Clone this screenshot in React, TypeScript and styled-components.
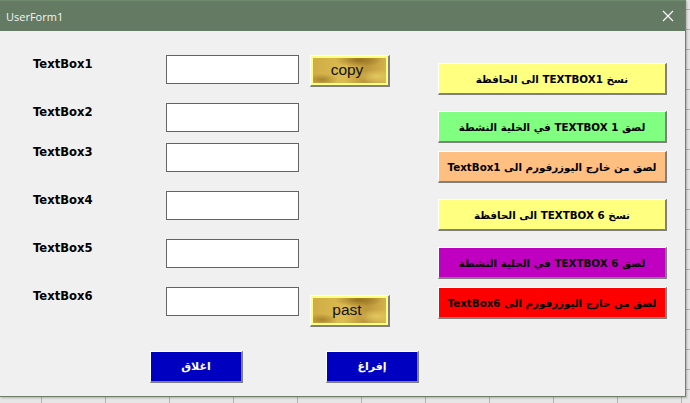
import * as React from 'react'
import styled, { createGlobalStyle } from 'styled-components'

const rows = [
  { label: 'TextBox1', top: 0, action: 'copy' },
  { label: 'TextBox2', top: 19 },
  { label: 'TextBox3', top: 11 },
  { label: 'TextBox4', top: 19 },
  { label: 'TextBox5', top: 19 },
  { label: 'TextBox6', top: 19, action: 'past' },
]

const sideButtons = [
  { text: 'نسخ TEXTBOX1 الى الحافظة', bg: '#ffff80', top: 0 },
  { text: 'لصق TEXTBOX 1 في الخلية النشطة', bg: '#80ff80', top: 16 },
  { text: 'لصق من خارج اليوزرفورم الى TextBox1', bg: '#ffbf80', top: 8 },
  { text: 'نسخ TEXTBOX 6 الى الحافظة', bg: '#ffff80', top: 16 },
  { text: 'لصق TEXTBOX 6 في الخلية النشطة', bg: '#c000c0', top: 16 },
  { text: 'لصق من خارج اليوزرفورم الى TextBox6', bg: '#ff0000', top: 8 },
]

const App: React.FC = () => {
  return (
    <Desktop>
      <GlobalStyle />
      <Window>
        <TitleBar>
          <Title>UserForm1</Title>
          <CloseButton>
            <svg width="12" height="12" viewBox="0 0 12 12">
              <path d="M1 1 L11 11 M11 1 L1 11" stroke="#fff" strokeWidth="1.1" fill="none" />
            </svg>
          </CloseButton>
        </TitleBar>
        <Body>
          <Main>
            <Fields>
              {rows.map((row) => (
                <FieldRow key={row.label} $top={row.top}>
                  <FieldLabel>{row.label}</FieldLabel>
                  <FieldInput type="text" />
                  {row.action && <GoldButton $low={row.action === 'past'}>{row.action}</GoldButton>}
                </FieldRow>
              ))}
            </Fields>
            <Side>
              {sideButtons.map((b) => (
                <SideButton key={b.text} $bg={b.bg} $top={b.top} dir="rtl">
                  {b.text}
                </SideButton>
              ))}
            </Side>
          </Main>
          <Footer>
            <BlueButton>اغلاق</BlueButton>
            <BlueButton>إفراغ</BlueButton>
          </Footer>
        </Body>
      </Window>
    </Desktop>
  )
}

export default App

const GlobalStyle = createGlobalStyle`
  html, body {
    margin: 0;
    padding: 0;
    background: #e6e6e6;
  }
`

const Desktop = styled.div`
  width: 690px;
  height: 403px;
  overflow: hidden;
  background-color: #e6e6e6;
  background-image:
    linear-gradient(to right, #b4b4b4 1px, transparent 1px),
    linear-gradient(to bottom, #b4b4b4 1px, transparent 1px);
  background-size: 64px 20px;
  background-position: 41px 9px;
`

const Window = styled.div`
  width: 686px;
  height: 397px;
  display: flex;
  flex-direction: column;
  background: #f0f0f0;
  border-right: 1px solid #6f7f68;
  border-bottom: 1px solid #6f7f68;
  box-sizing: border-box;
  box-shadow: 1px 1px 2px rgba(0, 0, 0, 0.25);
`

const TitleBar = styled.div`
  height: 31px;
  flex: none;
  display: flex;
  align-items: center;
  justify-content: space-between;
  padding: 0 0 0 6px;
  background: #647a62;
  border-top: 1px solid #6f8a6c;
  box-sizing: border-box;
`

const Title = styled.span`
  font-family: 'Open Sans', 'Noto Sans', sans-serif;
  font-size: 11px;
  color: #f4f6f4;
`

const CloseButton = styled.div`
  width: 32px;
  height: 30px;
  display: flex;
  align-items: center;
  justify-content: center;
  margin-right: 1px;
`

const Body = styled.div`
  flex: 1;
  display: flex;
  flex-direction: column;
  padding: 24px 0 0 33px;
`

const Main = styled.div`
  display: flex;
  height: 296px;
`

const Fields = styled.div`
  width: 405px;
  display: flex;
  flex-direction: column;
`

const FieldRow = styled.div<{ $top: number }>`
  display: grid;
  grid-template-columns: 133px 133px auto;
  margin-top: ${(p) => p.$top}px;
  align-items: start;
  height: 29px;
`

const FieldLabel = styled.label`
  font-family: 'DejaVu Sans', sans-serif;
  font-weight: bold;
  font-size: 11.6px;
  line-height: 18px;
  color: #000;
`

const FieldInput = styled.input`
  width: 133px;
  height: 29px;
  box-sizing: border-box;
  background: #fff;
  border: 1px solid #646464;
  outline: none;
  padding: 0;
`

const Bevel = styled.button`
  box-sizing: border-box;
  padding: 0;
  border-style: solid;
  border-width: 1px 2px 2px 1px;
  border-color: #fff #808080 #808080 #fff;
  cursor: pointer;
`

const GoldButton = styled(Bevel)<{ $low: boolean }>`
  width: 80px;
  height: 32px;
  margin-left: 11px;
  margin-top: ${(p) => (p.$low ? 8 : 0)}px;
  padding: 0 5px 2px 0;
  box-shadow: inset 0 0 0 2px #ffff80;
  background:
    radial-gradient(ellipse 24px 7px at 62% 14%, #96701f, transparent),
    radial-gradient(ellipse 16px 6px at 14% 82%, #a8842e, transparent),
    radial-gradient(ellipse 18px 7px at 85% 70%, #e2c75e, transparent),
    linear-gradient(100deg, #cfaa44, #dcbc52 45%, #bd973c 70%, #d9bb52);
  font-family: 'Liberation Sans', sans-serif;
  font-size: 15.5px;
  color: #111;
`

const Side = styled.div`
  padding-top: 8px;
  width: 229px;
  display: flex;
  flex-direction: column;
`

const SideButton = styled(Bevel)<{ $bg: string; $top: number }>`
  width: 229px;
  height: 32px;
  flex: none;
  margin-top: ${(p) => p.$top}px;
  background: ${(p) => p.$bg};
  font-family: 'DejaVu Sans', sans-serif;
  font-weight: bold;
  font-size: 10.3px;
  color: #000;
`

const Footer = styled.div`
  display: flex;
  gap: 83px;
  margin-left: 117px;
`

const BlueButton = styled(Bevel)`
  width: 93px;
  height: 32px;
  background: #0000c0;
  font-family: 'DejaVu Sans', sans-serif;
  font-weight: bold;
  font-size: 11px;
  color: #fff;
`
